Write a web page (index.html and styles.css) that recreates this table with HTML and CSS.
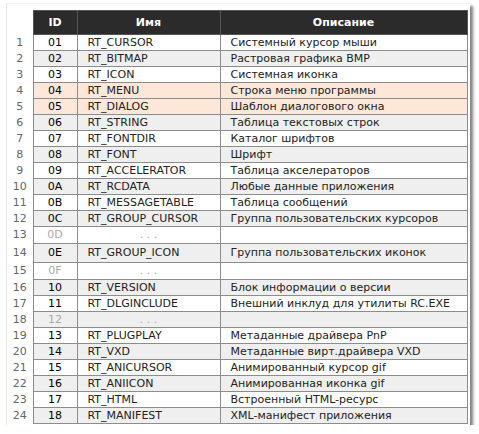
FILE: index.html
```html
<!DOCTYPE html>
<html lang="ru">
<head>
    <meta charset="UTF-8">
    <title>Типы ресурсов</title>
    <link rel="stylesheet" href="styles.css">
</head>
<body>
    <div class="frame">
        <table class="res-table">
            <colgroup>
                <col class="c-num">
                <col class="c-id">
                <col class="c-name">
                <col class="c-desc">
            </colgroup>
            <thead>
                <tr>
                    <th class="num"></th>
                    <th>ID</th>
                    <th>Имя</th>
                    <th>Описание</th>
                </tr>
            </thead>
            <tbody>
                <tr><td class="num">1</td><td class="id">01</td><td>RT_CURSOR</td><td>Системный курсор мыши</td></tr>
                <tr class="alt"><td class="num">2</td><td class="id">02</td><td>RT_BITMAP</td><td>Растровая графика BMP</td></tr>
                <tr><td class="num">3</td><td class="id">03</td><td>RT_ICON</td><td>Системная иконка</td></tr>
                <tr class="hl"><td class="num">4</td><td class="id">04</td><td>RT_MENU</td><td>Строка меню программы</td></tr>
                <tr class="hl"><td class="num">5</td><td class="id">05</td><td>RT_DIALOG</td><td>Шаблон диалогового окна</td></tr>
                <tr class="alt"><td class="num">6</td><td class="id">06</td><td>RT_STRING</td><td>Таблица текстовых строк</td></tr>
                <tr><td class="num">7</td><td class="id">07</td><td>RT_FONTDIR</td><td>Каталог шрифтов</td></tr>
                <tr class="alt"><td class="num">8</td><td class="id">08</td><td>RT_FONT</td><td>Шрифт</td></tr>
                <tr><td class="num">9</td><td class="id">09</td><td>RT_ACCELERATOR</td><td>Таблица акселераторов</td></tr>
                <tr class="alt"><td class="num">10</td><td class="id">0A</td><td>RT_RCDATA</td><td>Любые данные приложения</td></tr>
                <tr><td class="num">11</td><td class="id">0B</td><td>RT_MESSAGETABLE</td><td>Таблица сообщений</td></tr>
                <tr class="alt"><td class="num">12</td><td class="id">0C</td><td>RT_GROUP_CURSOR</td><td>Группа пользовательских курсоров</td></tr>
                <tr class="gap r17"><td class="num">13</td><td class="id">0D</td><td class="dots">. . .</td><td></td></tr>
                <tr class="alt r19"><td class="num">14</td><td class="id">0E</td><td>RT_GROUP_ICON</td><td>Группа пользовательских иконок</td></tr>
                <tr class="gap r17"><td class="num">15</td><td class="id">0F</td><td class="dots">. . .</td><td></td></tr>
                <tr class="alt"><td class="num">16</td><td class="id">10</td><td>RT_VERSION</td><td>Блок информации о версии</td></tr>
                <tr><td class="num">17</td><td class="id">11</td><td>RT_DLGINCLUDE</td><td>Внешний инклуд для утилиты RC.EXE</td></tr>
                <tr class="alt gap"><td class="num">18</td><td class="id">12</td><td class="dots">. . .</td><td></td></tr>
                <tr><td class="num">19</td><td class="id">13</td><td>RT_PLUGPLAY</td><td>Метаданные драйвера PnP</td></tr>
                <tr class="alt"><td class="num">20</td><td class="id">14</td><td>RT_VXD</td><td>Метаданные вирт.драйвера VXD</td></tr>
                <tr><td class="num">21</td><td class="id">15</td><td>RT_ANICURSOR</td><td>Анимированный курсор gif</td></tr>
                <tr class="alt"><td class="num">22</td><td class="id">16</td><td>RT_ANIICON</td><td>Анимированная иконка gif</td></tr>
                <tr><td class="num">23</td><td class="id">17</td><td>RT_HTML</td><td>Встроенный HTML-ресурс</td></tr>
                <tr class="alt"><td class="num">24</td><td class="id">18</td><td>RT_MANIFEST</td><td>XML-манифест приложения</td></tr>
            </tbody>
        </table>
    </div>
</body>
</html>
```

FILE: styles.css
```css
body {
    margin: 0;
    background: #ffffff;
    font-family: "DejaVu Sans", Verdana, sans-serif;
    font-size: 11px;
    color: #222;
}
.frame {
    width: 460px;
    margin: 3px 0 0 6px;
    padding: 6px 3px 1px 0;
    background: #ffffff;
    border-left: 1px solid #e6e6e6;
    border-top: 1px solid #f0f0f0;
    box-shadow: 3px 3px 3px rgba(0, 0, 0, 0.5);
    box-sizing: content-box;
}
.res-table {
    width: 460px;
    table-layout: fixed;
    border-collapse: collapse;
}
.c-num { width: 26px; }
.c-id { width: 44px; }
.c-name { width: 143px; }
.c-desc { width: 247px; }
.res-table th {
    height: 23px;
    padding: 0;
    background: #2b2b2b;
    color: #ffffff;
    font-weight: bold;
    text-align: center;
    border: 1px solid #555;
}
.res-table th.num {
    background: none;
    border: none;
}
.res-table td {
    height: 15px;
    padding: 0 0 0 10px;
    line-height: 14px;
    border: 1px solid #8c8c8c;
    background: #ffffff;
    white-space: nowrap;
}
.res-table tr.alt td {
    background: #efefef;
}
.res-table tr.hl td {
    background: #fce7d8;
}
.res-table tr.r17 td {
    height: 16px;
}
.res-table tr.r19 td {
    height: 18px;
}
.res-table td.num {
    padding: 0;
    text-align: center;
    color: #666;
    border: none;
    background: none !important;
}
.res-table td.id {
    padding: 0;
    text-align: center;
    color: #000;
}
.res-table tr.gap td.id {
    color: #aaa;
}
.res-table td.dots {
    padding: 0;
    text-align: center;
    color: #aaa;
}
```
